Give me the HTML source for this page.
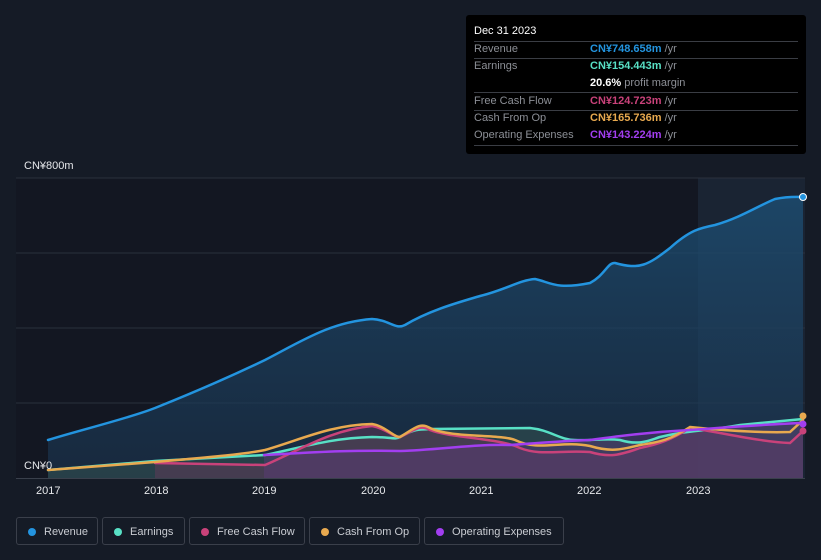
<!DOCTYPE html><html><head><style>
body{margin:0;width:821px;height:560px;background:#151b26;font-family:"Liberation Sans",sans-serif;overflow:hidden;position:relative}
.tt{position:absolute;left:466px;top:15px;width:340px;height:139px;background:#000;border-radius:3px;color:#8c8f96;font-size:11px}
.tt .r{position:absolute;left:8px;width:324px;border-top:1px solid #3a3d44}
.tt span{position:absolute}
.leg{position:absolute;top:517px;height:28px;border:1px solid #3a3f4a;border-radius:3px;color:#c9ccd2;font-size:11px;line-height:28px;box-sizing:border-box;padding-left:27px}
.leg i{position:absolute;left:11px;top:10px;width:8px;height:8px;border-radius:50%}
.ax{position:absolute;top:485px;color:#e6e8eb;font-size:11px}
</style></head><body>
<svg width="821" height="560" style="position:absolute;left:0;top:0">
<defs><linearGradient id="rg" x1="0" y1="0" x2="0" y2="1"><stop offset="0" stop-color="#1d4e73" stop-opacity=".8"/><stop offset="1" stop-color="#1b3550" stop-opacity=".6"/></linearGradient></defs>
<rect x="16" y="178" width="682" height="300" fill="#131722"/>
<rect x="698" y="178" width="107" height="300" fill="#1a2433"/>
<g stroke="#2a303c" stroke-width="1"><line x1="16" y1="178" x2="805" y2="178"/><line x1="16" y1="253" x2="805" y2="253"/><line x1="16" y1="328" x2="805" y2="328"/><line x1="16" y1="403" x2="805" y2="403"/><line x1="16" y1="478.5" x2="805" y2="478.5" stroke="#3a404c"/></g>
<path d="M48,440 C80,430 130,418 155,408 C200,390 240,372 265,360 C300,342 330,322 372,319 C390,320 395,330 405,325 C430,310 460,302 480,296 C505,290 520,280 535,279 C550,282 555,290 590,283 C605,275 608,262 615,263 C640,270 648,265 670,248 C690,230 700,228 715,225 C740,218 760,205 775,199 C790,196 800,197 803,197 L803,478 L48,478Z" fill="url(#rg)"/>
<path d="M48,470 L155,461 265,455 C300,448 330,438 372,437 C400,436 410,432 430,429 L530,428 C560,438 575,443 590,441 C620,438 640,445 660,437 C690,430 700,432 740,425 L803,419 L803,478 L48,478Z" fill="#3a5a55" opacity=".45"/>
<path d="M155,463 L265,465 C300,450 330,430 372,426 C385,428 395,438 400,437 C415,430 420,424 430,430 C450,438 500,438 520,448 C540,456 560,450 590,452 C610,458 620,455 640,448 C660,444 670,440 690,428 C720,432 760,442 790,443 L803,431 L803,478 L155,478Z" fill="#6a3a5a" opacity=".45"/>
<path d="M264,455 C320,452 350,450 400,451 C440,450 470,444 510,445 C540,443 560,441 590,440 C620,436 650,432 690,430 C730,427 770,424 803,423 L803,478 L264,478Z" fill="#5a3a7a" opacity=".45"/>
<g fill="none" stroke-width="2.5" stroke-linecap="round">
<path d="M48,440 C80,430 130,418 155,408 C200,390 240,372 265,360 C300,342 330,322 372,319 C390,320 395,330 405,325 C430,310 460,302 480,296 C505,290 520,280 535,279 C550,282 555,290 590,283 C605,275 608,262 615,263 C640,270 648,265 670,248 C690,230 700,228 715,225 C740,218 760,205 775,199 C790,196 800,197 803,197" stroke="#2394df"/>
<path d="M48,470 L155,461 265,455 C300,448 330,438 372,437 C390,437 395,440 400,437 C415,428 420,430 430,429 L530,428 C550,430 560,440 575,440 C590,441 605,438 620,440 C640,446 650,440 660,437 C690,430 700,432 740,425 L803,419" stroke="#58e0c5"/>
<path d="M155,463 L265,465 C300,450 330,430 372,426 C385,428 395,438 400,437 C415,430 420,424 430,430 C450,438 500,438 520,448 C540,456 560,450 590,452 C610,458 620,455 640,448 C660,444 670,440 690,428 C720,432 760,442 790,443 L803,431" stroke="#c9427a"/>
<path d="M48,470 L155,462 C200,458 240,455 265,450 C300,440 330,425 372,424 C385,426 395,438 400,437 C415,428 420,422 430,428 C450,438 500,434 515,440 C540,452 560,440 590,446 C610,452 620,450 640,445 C660,442 670,440 690,427 C720,430 760,433 790,432 L803,420" stroke="#e8a94f"/>
<path d="M264,455 C320,452 350,450 400,451 C440,450 470,444 510,445 C540,443 560,441 590,440 C620,436 650,432 690,430 C730,427 770,424 803,423" stroke="#a23ef0"/>
</g>
<circle cx="803" cy="197" r="3.5" fill="#2394df" stroke="#fff"/>
<circle cx="803" cy="416" r="3.5" fill="#e8a94f"/>
<circle cx="803" cy="424" r="3.5" fill="#a23ef0"/>
<circle cx="803" cy="431" r="3.5" fill="#c9427a"/>
</svg>
<div style="position:absolute;left:24px;top:160px;color:#e6e8eb;font-size:11px">CN¥800m</div>
<div style="position:absolute;left:24px;top:460px;color:#e6e8eb;font-size:11px">CN¥0</div>
<div class="ax" style="left:36px">2017</div><div class="ax" style="left:144px">2018</div><div class="ax" style="left:252px">2019</div><div class="ax" style="left:361px">2020</div><div class="ax" style="left:469px">2021</div><div class="ax" style="left:577px">2022</div><div class="ax" style="left:686px">2023</div>
<div class="tt">
<span style="left:8px;top:10px;color:#fff">Dec 31 2023</span>
<div class="r" style="top:26px"></div>
<span style="left:8px;top:28px">Revenue</span><span style="left:124px;top:28px"><b style="color:#2394df">CN¥748.658m</b> /yr</span>
<div class="r" style="top:43px"></div>
<span style="left:8px;top:45px">Earnings</span><span style="left:124px;top:45px"><b style="color:#58e0c5">CN¥154.443m</b> /yr</span>
<span style="left:124px;top:62px"><b style="color:#fff">20.6%</b> profit margin</span>
<div class="r" style="top:77px"></div>
<span style="left:8px;top:80px">Free Cash Flow</span><span style="left:124px;top:80px"><b style="color:#c9427a">CN¥124.723m</b> /yr</span>
<div class="r" style="top:95px"></div>
<span style="left:8px;top:97px">Cash From Op</span><span style="left:124px;top:97px"><b style="color:#e8a94f">CN¥165.736m</b> /yr</span>
<span style="left:8px;top:114px">Operating Expenses</span><span style="left:124px;top:114px"><b style="color:#a23ef0">CN¥143.224m</b> /yr</span>
<div class="r" style="top:130px"></div>
</div>
<div class="leg" style="left:16px;width:82px"><i style="background:#2394df"></i>Revenue</div>
<div class="leg" style="left:102px;width:83px"><i style="background:#58e0c5"></i>Earnings</div>
<div class="leg" style="left:189px;width:116px"><i style="background:#c9427a"></i>Free Cash Flow</div>
<div class="leg" style="left:309px;width:111px"><i style="background:#e8a94f"></i>Cash From Op</div>
<div class="leg" style="left:424px;width:140px"><i style="background:#a23ef0"></i>Operating Expenses</div>
</body></html>
